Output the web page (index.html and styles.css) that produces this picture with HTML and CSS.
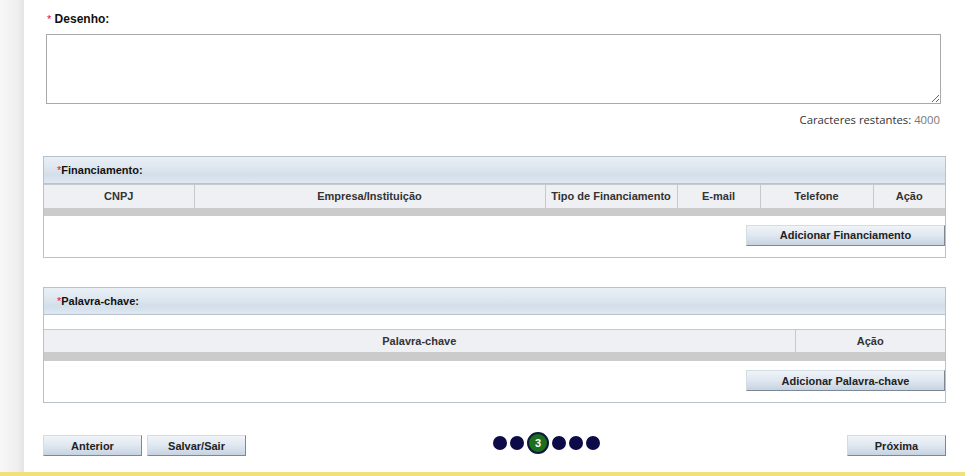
FILE: index.html
```html
<!DOCTYPE html>
<html lang="pt-BR">

<head>
	<meta charset="utf-8">
	<title>Cadastro - Desenho</title>
	<meta name="viewport" content="width=device-width, initial-scale=1">
	<link rel="stylesheet" href="styles.css">
</head>

<body>
	<div class="frame">
		<aside class="shade"></aside>
		<main class="page">
			<div class="field">
				<label class="label" for="desenho"><span class="req">*</span> Desenho:</label>
				<textarea id="desenho" class="area"></textarea>
				<p class="counter">Caracteres restantes: <span>4000</span></p>
			</div>

			<section class="panel">
				<header class="panel-title"><span class="req">*</span>Financiamento:</header>
				<table class="grid">
					<thead>
						<tr>
							<th style="width:150px">CNPJ</th>
							<th>Empresa/Instituição</th>
							<th style="width:132px">Tipo de Financiamento</th>
							<th style="width:83px">E-mail</th>
							<th style="width:113px">Telefone</th>
							<th style="width:72px">Ação</th>
						</tr>
					</thead>
				</table>
				<div class="grid-foot"></div>
				<div class="panel-actions">
					<button type="button" class="btn btn-wide">Adicionar Financiamento</button>
				</div>
			</section>

			<section class="panel">
				<header class="panel-title"><span class="req">*</span>Palavra-chave:</header>
				<div class="spacer"></div>
				<table class="grid">
					<thead>
						<tr>
							<th>Palavra-chave</th>
							<th style="width:150px">Ação</th>
						</tr>
					</thead>
				</table>
				<div class="grid-foot tall"></div>
				<div class="panel-actions">
					<button type="button" class="btn btn-wide">Adicionar Palavra-chave</button>
				</div>
			</section>

			<nav class="wizard">
				<div class="wizard-left">
					<button type="button" class="btn">Anterior</button>
					<button type="button" class="btn">Salvar/Sair</button>
				</div>
				<ol class="steps">
					<li></li>
					<li></li>
					<li class="current">3</li>
					<li></li>
					<li></li>
					<li></li>
				</ol>
				<button type="button" class="btn next">Próxima</button>
			</nav>
		</main>
	</div>
	<div class="bottom-line"></div>
</body>

</html>
```

FILE: styles.css
```css
*,
*::before,
*::after {
	box-sizing: border-box;
}

:root {
	--panel-border: #b6c3cf;
	--cell-border: #c4c9cf;
	--text: #222;
}

body {
	margin: 0;
	font-family: "Liberation Sans", Arial, sans-serif;
	font-size: 11px;
	color: var(--text);
	background: #fff;
}

.frame {
	display: flex;
	height: 472px;
	overflow: hidden;
}

.shade {
	width: 24px;
	flex-shrink: 0;
	background: linear-gradient(to right, #f8f8f8, #efefef 70%, #e4e4e4);
}

.page {
	flex: 1;
	padding: 12px 19px 0 19px;
}

.bottom-line {
	height: 4px;
	background: #f4e07a;
}

.req {
	color: #d22;
	font-weight: normal;
}

/* textarea block */
.field {
	padding-left: 3px;
	padding-right: 5px;
}

.label {
	display: block;
	height: 14px;
	line-height: 14px;
	margin-left: 1px;
	font-size: 12px;
	font-weight: bold;
	color: #111;

	.req {
		font-size: 11px;
	}
}

.area {
	display: block;
	width: 100%;
	height: 70px;
	margin-top: 8px;
	border: 1px solid #a9a9a9;
	font: inherit;
}

.counter {
	margin: 9px 1px 0 0;
	line-height: 14px;
	text-align: right;
	font-family: "Open Sans", sans-serif;
	font-size: 11.3px;
	color: #333;

	span {
		color: #777;
	}
}

/* panels */
.panel {
	margin-top: 29px;
	border: 1px solid var(--panel-border);
	background: #fff;
}

.panel-title {
	height: 27px;
	line-height: 27px;
	padding-left: 13px;
	border-bottom: 1px solid var(--panel-border);
	background: linear-gradient(#e9eff6, #dde6ef 45%, #d2deea 70%, #e0e8f1);
	font-weight: bold;
	color: #111;
}

.spacer {
	height: 14px;
}

.grid {
	width: 100%;
	border-collapse: collapse;
	table-layout: fixed;

	th {
		height: 23px;
		padding: 0 2px;
		border: 1px solid var(--cell-border);
		border-bottom: 0;
		background: #eef0f3;
		font-weight: bold;
		color: #333;
		text-align: center;
		white-space: nowrap;

		&:first-child {
			border-left: 0;
		}

		&:last-child {
			border-right: 0;
		}
	}
}

.grid-foot {
	height: 8px;
	background: #cbcbcb;

	&.tall {
		height: 9px;
	}
}

.panel-actions {
	display: flex;
	justify-content: flex-end;
	padding: 9px 0 11px;
}

/* buttons */
.btn {
	height: 21px;
	width: 99px;
	padding: 0;
	border: 1px solid;
	border-color: #d3dbe4 #7d8894 #7d8894 #d3dbe4;
	background: linear-gradient(#f0f4f9, #dfe7f0 50%, #c7d3e1);
	font: inherit;
	font-weight: bold;
	color: var(--text);
	cursor: pointer;
}

.btn-wide {
	width: 199px;
}

/* bottom wizard */
.wizard {
	display: flex;
	align-items: flex-start;
	margin-top: 32px;
}

.wizard-left {
	display: flex;
	gap: 5px;
}

.steps {
	display: flex;
	align-items: center;
	gap: 3px;
	margin: -3px 0 0 247px;
	padding: 0;
	list-style: none;

	li {
		width: 14px;
		height: 14px;
		border-radius: 50%;
		background: #0c0b47;
	}

	.current {
		width: 22px;
		height: 22px;
		border: 2px solid #0c1a3a;
		background: #1c6f1c;
		color: #fff;
		font-weight: bold;
		font-size: 11px;
		line-height: 18px;
		text-align: center;
	}
}

.next {
	margin-left: auto;
}
```
